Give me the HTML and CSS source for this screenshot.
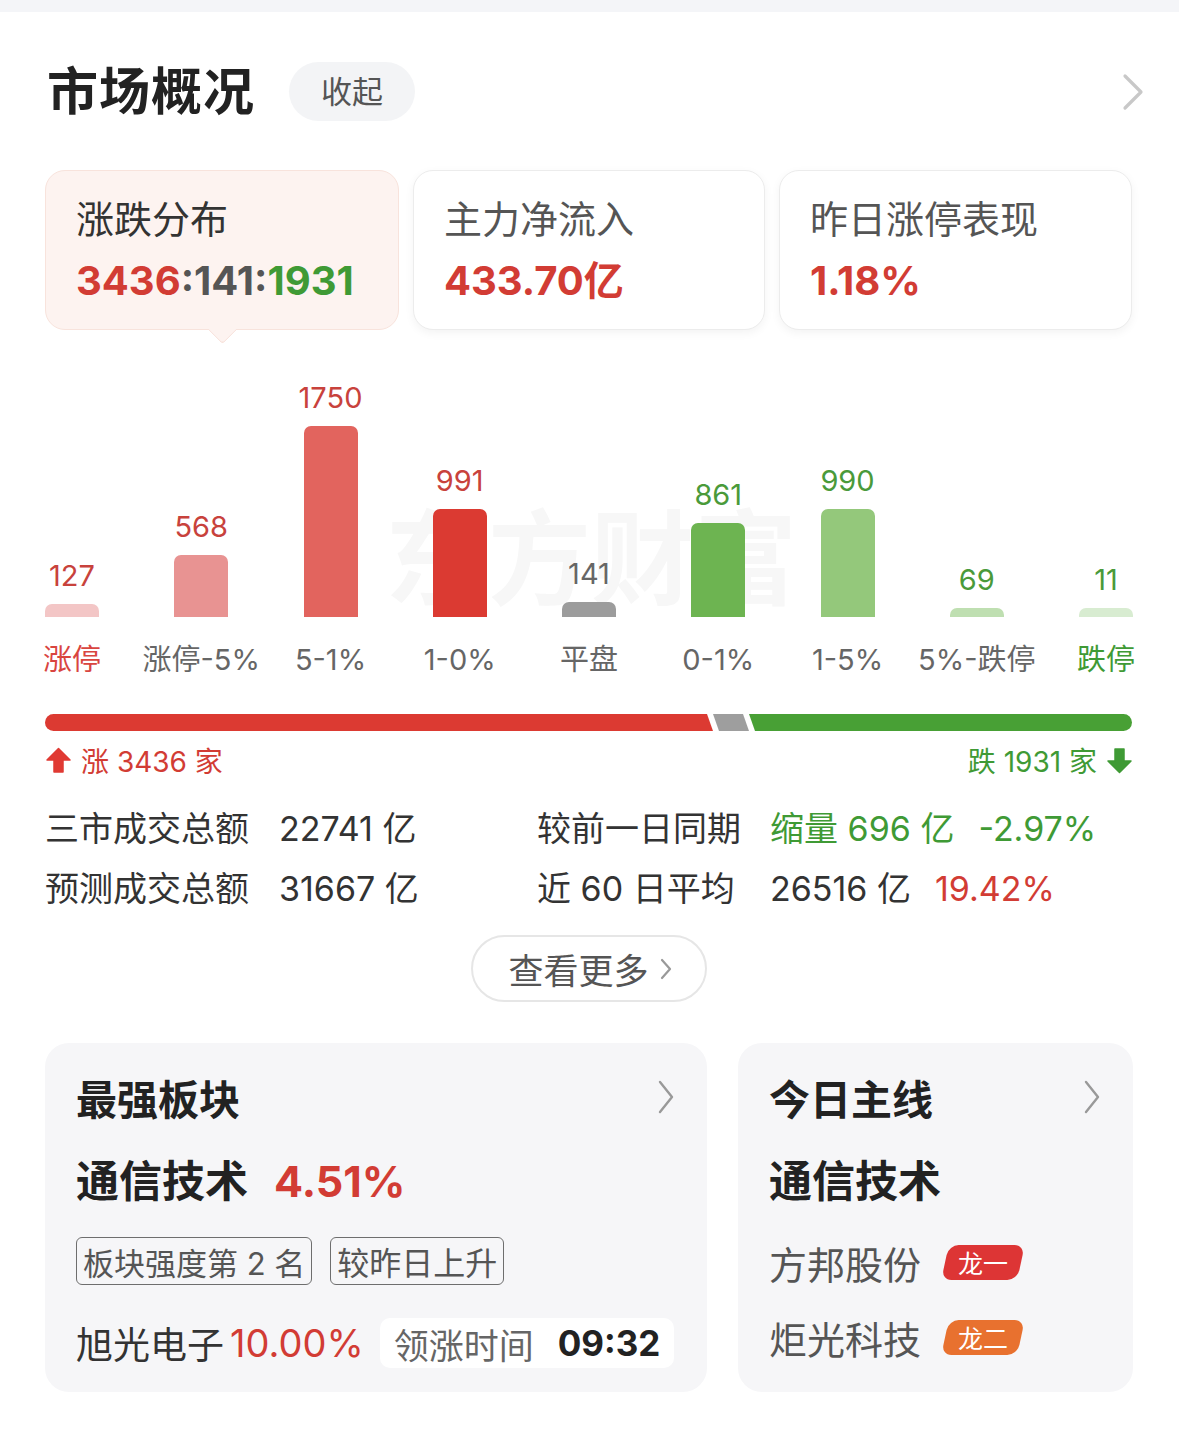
FILE: index.html
```html
<!DOCTYPE html>
<html lang="zh-CN">
<head>
<meta charset="utf-8">
<title>市场概况</title>
<link rel="stylesheet" href="styles.css">
</head>
<body>
<div class="topstrip"></div>
<div class="page">
  <div class="header">
    <h1 class="title">市场概况</h1>
    <span class="pill">收起</span>
    <svg class="chev-big" width="24" height="40" viewBox="0 0 24 40"><polyline points="4,4 20,20 4,36" fill="none" stroke="#c8c8c8" stroke-width="3.2" stroke-linecap="round" stroke-linejoin="round"/></svg>
  </div>

  <div class="cards">
    <div class="card active">
      <div class="card-label">涨跌分布</div>
      <div class="card-value"><span class="red">3436</span><span class="grey">:141:</span><span class="green">1931</span></div>
    </div>
    <div class="card">
      <div class="card-label">主力净流入</div>
      <div class="card-value red">433.70亿</div>
    </div>
    <div class="card">
      <div class="card-label">昨日涨停表现</div>
      <div class="card-value red">1.18%</div>
    </div>
  </div>

  <div class="chart">
    <div class="watermark">东方财富</div>
    <div class="bars">
      <div class="col"><span class="num red">127</span><div class="bar c1" style="height:13px"></div></div>
      <div class="col"><span class="num red">568</span><div class="bar c2" style="height:62px"></div></div>
      <div class="col"><span class="num red">1750</span><div class="bar c3" style="height:191px"></div></div>
      <div class="col"><span class="num red">991</span><div class="bar c4" style="height:108px"></div></div>
      <div class="col"><span class="num grey">141</span><div class="bar c5" style="height:15px"></div></div>
      <div class="col"><span class="num green">861</span><div class="bar c6" style="height:94px"></div></div>
      <div class="col"><span class="num green">990</span><div class="bar c7" style="height:108px"></div></div>
      <div class="col"><span class="num green">69</span><div class="bar c8" style="height:9px"></div></div>
      <div class="col"><span class="num green">11</span><div class="bar c9" style="height:9px"></div></div>
    </div>
    <div class="labels">
      <div class="lab red">涨停</div>
      <div class="lab">涨停-5%</div>
      <div class="lab">5-1%</div>
      <div class="lab">1-0%</div>
      <div class="lab">平盘</div>
      <div class="lab">0-1%</div>
      <div class="lab">1-5%</div>
      <div class="lab">5%-跌停</div>
      <div class="lab green">跌停</div>
    </div>
  </div>

  <div class="ratio">
    <div class="seg seg-red" style="width:668px"></div>
    <div class="seg seg-grey" style="width:36px"></div>
    <div class="seg seg-green" style="width:383px"></div>
  </div>
  <div class="ratio-legend">
    <span class="up red"><svg width="27" height="27" viewBox="0 0 27 27"><path d="M13.5 1.5 L25 13 L18 13 L18 25 L9 25 L9 13 L2 13 Z" fill="#e03a33" stroke="#e03a33" stroke-width="1.5" stroke-linejoin="round"/></svg><span>涨 3436 家</span></span>
    <span class="down green"><span>跌 1931 家</span><svg width="27" height="27" viewBox="0 0 27 27"><path d="M9 2 L18 2 L18 14 L25 14 L13.5 25.5 L2 14 L9 14 Z" fill="#3f9a35" stroke="#3f9a35" stroke-width="1.5" stroke-linejoin="round"/></svg></span>
  </div>

  <div class="stats">
    <span class="s-label">三市成交总额</span>
    <span class="s-val">22741 亿</span>
    <span class="s-label">较前一日同期</span>
    <span class="s-val"><span class="green">缩量 696 亿</span><span class="s-pct green">-2.97%</span></span>
    <span class="s-label">预测成交总额</span>
    <span class="s-val">31667 亿</span>
    <span class="s-label">近 60 日平均</span>
    <span class="s-val">26516 亿<span class="s-pct red">19.42%</span></span>
  </div>

  <div class="more-wrap">
    <div class="more">查看更多
      <svg width="14" height="24" viewBox="0 0 14 24"><polyline points="3,3 11,12 3,21" fill="none" stroke="#999" stroke-width="2.2" stroke-linecap="round" stroke-linejoin="round"/></svg>
    </div>
  </div>

  <div class="bottom">
    <div class="panel panel-a">
      <div class="panel-head">
        <span class="panel-title">最强板块</span>
        <svg width="18" height="36" viewBox="0 0 18 36"><polyline points="3,3 15,18 3,33" fill="none" stroke="#999" stroke-width="2.4" stroke-linecap="round" stroke-linejoin="round"/></svg>
      </div>
      <div class="panel-main">通信技术<span class="main-pct red">4.51%</span></div>
      <div class="tags">
        <span class="tag">板块强度第 2 名</span>
        <span class="tag">较昨日上升</span>
      </div>
      <div class="lead-row">
        <span class="lead-name">旭光电子</span><span class="lead-pct red">10.00%</span>
        <span class="lead-box"><span class="lead-k">领涨时间</span><span class="lead-t">09:32</span></span>
      </div>
    </div>
    <div class="panel panel-b">
      <div class="panel-head">
        <span class="panel-title">今日主线</span>
        <svg width="18" height="36" viewBox="0 0 18 36"><polyline points="3,3 15,18 3,33" fill="none" stroke="#999" stroke-width="2.4" stroke-linecap="round" stroke-linejoin="round"/></svg>
      </div>
      <div class="panel-main">通信技术</div>
      <div class="stock"><span class="stock-name">方邦股份</span><span class="badge badge-red"><span>龙一</span></span></div>
      <div class="stock"><span class="stock-name">炬光科技</span><span class="badge badge-orange"><span>龙二</span></span></div>
    </div>
  </div>
</div>
</body>
</html>
```

FILE: styles.css
```css
* { box-sizing: border-box; }
html, body { margin: 0; padding: 0; background: #fff; }
body {
  font-family: Inter, "Noto Sans CJK SC", "Noto Sans", sans-serif;
  color: #333;
  width: 1179px;
  overflow: hidden;
}
.topstrip { height: 12px; background: #f4f5f8; }
.page { padding: 0 46px 0 45px; }

.red { color: #d23c34; }
.green { color: #3f9a35; }
.grey { color: #555; }

.header {
  display: flex;
  align-items: center;
  height: 59px;
  margin-top: 50px;
}
.title {
  margin: 0 34px 0 2px;
  font-size: 51px;
  font-weight: 700;
  color: #222;
  line-height: 59px;
  letter-spacing: 1px;
}
.pill {
  height: 59px;
  line-height: 59px;
  padding: 0 32px;
  border-radius: 30px;
  background: #f3f4f6;
  font-size: 31px;
  color: #555;
}
.chev-big { margin-left: auto; margin-right: -12px; }

.cards {
  display: grid;
  grid-template-columns: 354px 352px 353px;
  gap: 14px;
  margin-top: 49px;
}
.card {
  position: relative;
  height: 160px;
  border-radius: 20px;
  background: #fff;
  border: 1.5px solid #ececec;
  box-shadow: 0 3px 10px rgba(0, 0, 0, 0.05);
  padding: 25px 0 0 30px;
}
.card.active {
  background: #fdf3f0;
  border-color: #f8e3dc;
  box-shadow: none;
}
.card.active::after {
  content: "";
  position: absolute;
  left: 50%;
  bottom: -11px;
  width: 20px;
  height: 20px;
  margin-left: -10px;
  background: #fdf3f0;
  border-right: 1.5px solid #f8e3dc;
  border-bottom: 1.5px solid #f8e3dc;
  transform: rotate(45deg);
  border-bottom-right-radius: 4px;
}
.card-label {
  font-size: 38px;
  line-height: 46px;
  color: #555;
}
.card.active .card-label { color: #333; }
.card-value {
  margin-top: 15px;
  font-size: 40px;
  line-height: 48px;
  font-weight: 700;
}
.card-value .grey { color: #555; }

.chart { position: relative; margin-top: 40px; }
.watermark {
  position: absolute;
  left: 340px;
  top: 160px;
  font-size: 103px;
  line-height: 60px;
  font-weight: 700;
  color: #f7f7f7;
  white-space: nowrap;
  z-index: 0;
}
.bars {
  position: relative;
  z-index: 1;
  display: flex;
  justify-content: space-between;
  align-items: flex-end;
  height: 247px;
}
.col {
  width: 54px;
  display: flex;
  flex-direction: column;
  align-items: center;
}
.num {
  font-size: 29px;
  line-height: 32px;
  white-space: nowrap;
  margin-bottom: 12px;
}
.num.red { color: #c8423c; }
.num.grey { color: #666; }
.num.green { color: #4a9a3a; }
.bar {
  width: 54px;
  border-radius: 7px 7px 0 0;
}
.c1 { background: #f3c6c6; }
.c2 { background: #e89392; }
.c3 { background: #e2645e; }
.c4 { background: #db3a32; }
.c5 { background: #9c9c9c; }
.c6 { background: #6db451; }
.c7 { background: #94c87b; }
.c8 { background: #bfdfb1; }
.c9 { background: #d8ecd1; }

.labels {
  display: flex;
  justify-content: space-between;
  margin-top: 23px;
}
.lab {
  width: 54px;
  display: flex;
  justify-content: center;
  white-space: nowrap;
  font-size: 29px;
  line-height: 40px;
  color: #666;
}
.lab.red { color: #d9453f; }
.lab.green { color: #3f9a35; }

.ratio {
  display: flex;
  height: 17px;
  margin-top: 34px;
}
.seg { height: 17px; }
.seg-red {
  background: #dc3a32;
  border-radius: 9px 0 0 9px;
  clip-path: polygon(0 0, calc(100% - 6px) 0, 100% 100%, 0 100%);
}
.seg-grey {
  background: #9e9e9e;
  clip-path: polygon(0 0, calc(100% - 6px) 0, 100% 100%, 6px 100%);
}
.seg-green {
  background: #48a035;
  border-radius: 0 9px 9px 0;
  clip-path: polygon(0 0, 100% 0, 100% 100%, 6px 100%);
}

.ratio-legend {
  display: flex;
  justify-content: space-between;
  align-items: center;
  height: 36px;
  margin-top: 11px;
  font-size: 28px;
}
.up, .down { display: flex; align-items: center; gap: 9px; }
.up.red { color: #d23c34; }

.stats {
  display: grid;
  grid-template-columns: 234px 258px 233px auto;
  margin-top: 21px;
  font-size: 34px;
  line-height: 60px;
  color: #333;
}
.s-label { white-space: nowrap; }
.s-val { white-space: nowrap; }
.s-pct { margin-left: 24px; }

.more-wrap { display: flex; justify-content: center; margin-top: 16px; }
.more {
  display: flex;
  align-items: center;
  gap: 10px;
  height: 67px;
  padding: 0 32px 0 35px;
  border: 2px solid #e6e6e6;
  border-radius: 34px;
  font-size: 35px;
  color: #555;
}

.bottom {
  display: flex;
  gap: 31px;
  margin-top: 41px;
}
.panel {
  height: 349px;
  border-radius: 24px;
  background: #f6f6f8;
  padding: 30px 32px 0 31px;
}
.panel-a { width: 662px; }
.panel-b { flex: 1; }
.panel-head {
  display: flex;
  justify-content: space-between;
  align-items: center;
  height: 48px;
}
.panel-title {
  font-size: 41px;
  font-weight: 700;
  color: #222;
}
.panel-main {
  margin-top: 32px;
  font-size: 43px;
  line-height: 56px;
  font-weight: 700;
  color: #222;
}
.main-pct { margin-left: 26px; }
.tags {
  display: flex;
  gap: 18px;
  margin-top: 28px;
}
.tag {
  display: inline-flex;
  align-items: center;
  height: 48px;
  padding: 0 6px;
  border: 1.5px solid #6e6e6e;
  border-radius: 6px;
  font-size: 31px;
  color: #555;
  white-space: nowrap;
}
.tag + .tag { font-size: 32px; }
.lead-row {
  display: flex;
  align-items: center;
  margin-top: 33px;
  height: 50px;
  font-size: 37px;
}
.lead-name { color: #333; }
.lead-pct { margin-left: 6px; font-size: 38px; }
.lead-box {
  display: flex;
  align-items: center;
  height: 50px;
  margin-left: 16px;
  padding: 0 14px;
  background: #fff;
  border-radius: 10px;
}
.lead-k { font-size: 35px; color: #666; }
.lead-t { margin-left: 24px; font-size: 35px; font-weight: 700; color: #222; }

.stock {
  display: flex;
  align-items: center;
  height: 50px;
}
.panel-b .panel-main + .stock { margin-top: 28px; }
.panel-b .stock + .stock { margin-top: 25px; }
.stock-name { font-size: 38px; color: #555; }
.badge {
  position: relative;
  display: inline-flex;
  align-items: center;
  justify-content: center;
  width: 76px;
  height: 35px;
  margin-left: 24px;
  font-size: 25px;
  color: #fff;
}
.badge::before {
  content: "";
  position: absolute;
  inset: 0;
  border-radius: 10px;
  transform: skewX(-12deg);
}
.badge span { position: relative; }
.badge-red::before { background: #dd3535; }
.badge-orange::before { background: #e8712f; }
```
